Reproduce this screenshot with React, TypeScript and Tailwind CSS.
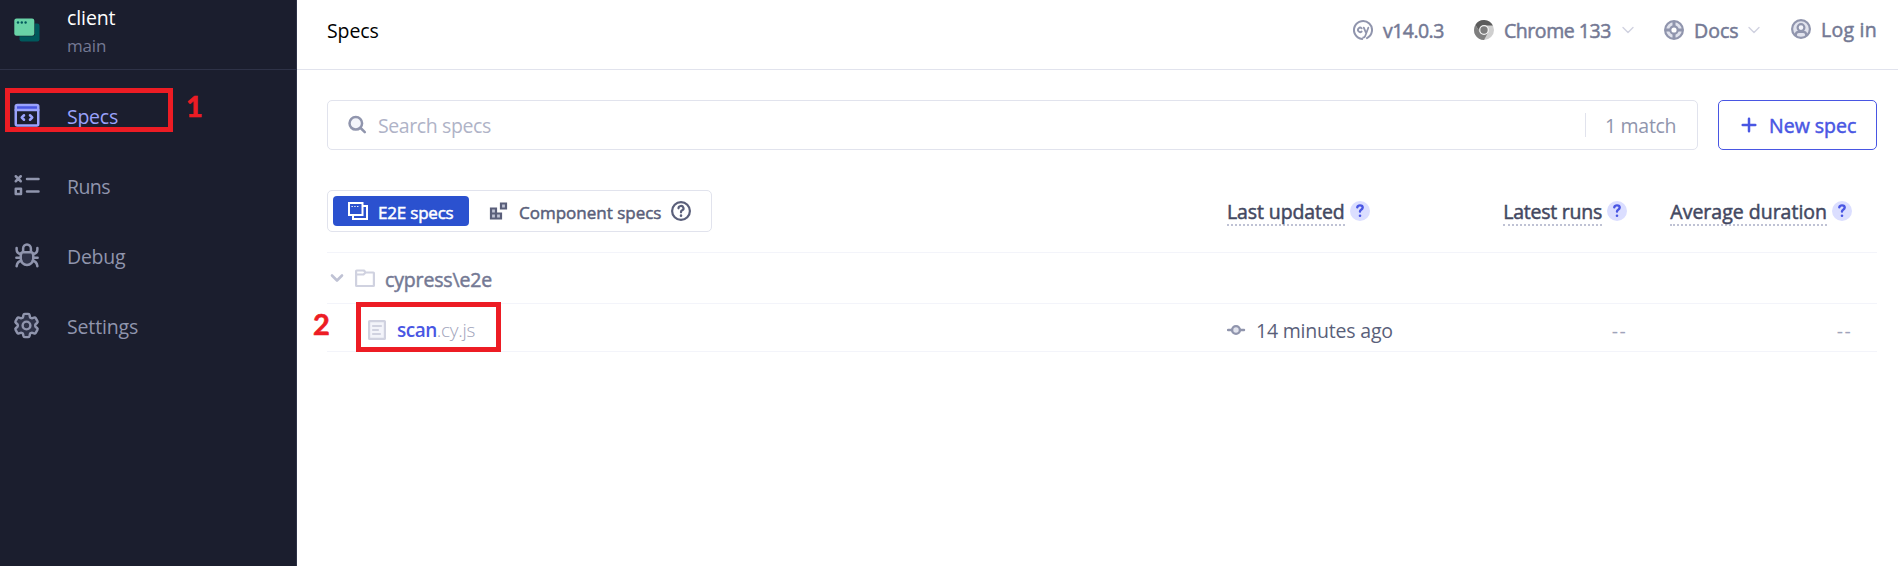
import React from "react";
import { HiOutlineCog6Tooth } from "react-icons/hi2";

const MEDIUM = "[-webkit-text-stroke:0.5px]";

function ProjectLogo() {
  return (
    <svg width="30" height="30" viewBox="0 0 30 30" className="shrink-0">
      <rect x="7.5" y="8.5" width="20" height="18" rx="2.2" fill="#00595c" />
      <rect x="2" y="3" width="20.7" height="18.3" rx="2.6" fill="#1b1e2e" />
      <rect x="2.3" y="3.5" width="20" height="17.3" rx="2.2" fill="#69d3a7" />
      <g fill="#00595c">
        <circle cx="6" cy="7.5" r="1.2" />
        <circle cx="9.8" cy="7.5" r="1.2" />
        <circle cx="13.6" cy="7.5" r="1.2" />
      </g>
    </svg>
  );
}

function SpecsIcon() {
  return (
    <svg width="30" height="30" viewBox="0 0 24 24" fill="none" strokeWidth="2" strokeLinecap="round" strokeLinejoin="round">
      <path d="M3 4h18v4H3z" fill="#4956e3" />
      <rect x="3" y="4" width="18" height="16.4" rx="1.2" stroke="#9aa2fc" />
      <path d="M3 8h18M9.6 12.2 7.8 14l1.8 1.8M14.4 12.2l1.8 1.8-1.8 1.8" stroke="#9aa2fc" />
    </svg>
  );
}

function RunsIcon() {
  return (
    <svg width="30" height="30" viewBox="0 0 24 24" fill="none" stroke="#9095ad" strokeWidth="2" strokeLinecap="round">
      <path d="m3 5 4 4M7 5 3 9M12 7.1h9.2M12 17.1h9.2" />
      <rect x="3" y="15" width="4.2" height="4.2" strokeLinejoin="round" />
    </svg>
  );
}

function DebugIcon() {
  return (
    <svg width="30" height="30" viewBox="0 0 24 24" fill="none" stroke="#9095ad" strokeWidth="2" strokeLinecap="round" strokeLinejoin="round">
      <path d="M8.9 9.6V6.7a3.1 3.1 0 0 1 6.2 0v2.9" />
      <path d="M9 9.8h6c1.3 0 2 .8 2 2v3.2a5 5 0 0 1-10 0v-3.2c0-1.2.7-2 2-2Z" fill="#2e3247" />
      <path d="M3.7 6.3v1.2c0 2 1 3.3 3.6 3.7M20.3 6.3v1.2c0 2-1 3.3-3.6 3.7M3.5 14.2H7M17 14.2h3.5M7.4 16.6c-2.2.4-3.4 1.8-3.7 4.4M16.6 16.6c2.2.4 3.4 1.8 3.7 4.4" />
    </svg>
  );
}

function CyIcon() {
  return (
    <svg width="20" height="20" viewBox="0 0 20 20" fill="none" stroke="#9095ad" strokeWidth="2" strokeLinecap="round">
      <path d="M9.2 19A9 9 0 1 1 14 18.1" />
      <path d="M8.7 8.300a2.200 2.200 0 1 0 0 3.200M10.800 7.700l1.900 4.500M15.300 7.700l-3.200 8.500c-.4 1-.9 1.400-1.900 1.300" strokeWidth="1.800" />
    </svg>
  );
}

function ChromeIcon() {
  return (
    <svg width="20" height="20" viewBox="0 0 20 20">
      <circle cx="10" cy="10" r="10" fill="#cfcfcf" />
      <path d="M10 5.500h8.900A10 10 0 0 0 1.340 5L6 12Z" fill="#5c5c5c" />
      <path d="M1.340 5A10 10 0 0 0 10 20l4-7.500-8-.3Z" fill="#7f7f7f" />
      <circle cx="10" cy="10" r="4.900" fill="#f4f4f4" />
      <circle cx="10" cy="10" r="3.700" fill="#7d7d7d" />
    </svg>
  );
}

function DocsIcon() {
  return (
    <svg width="20" height="20" viewBox="0 0 20 20" fill="none" stroke="#9095ad" strokeWidth="2.200">
      <circle cx="10" cy="10" r="8.900" fill="#e1e3ed" />
      <circle cx="10" cy="10" r="3.700" fill="#fff" />
      <path d="M10 1v5.300M10 13.700V19M1 10h5.300M13.700 10H19" strokeWidth="3" />
    </svg>
  );
}

function UserIcon() {
  return (
    <svg width="20" height="20" viewBox="0 0 20 20" fill="none" stroke="#9095ad" strokeWidth="2.200">
      <circle cx="10" cy="10" r="8.900" fill="#e1e3ed" />
      <path d="M4.800 17v-1.300c0-1.800 1.300-2.900 3-2.900h4.400c1.700 0 3 1.100 3 2.900V17" />
      <circle cx="10" cy="8.600" r="3.400" fill="#f3f4fa" />
    </svg>
  );
}

function Chevron({ thin }: { thin?: boolean }) {
  return (
    <svg width="20" height="20" viewBox="0 0 20 20" fill="none" strokeLinecap="round" strokeLinejoin="round"
      stroke={thin ? "#d0d2e0" : "#bfc2d4"} strokeWidth={thin ? 1.4 : 2.6} className="shrink-0">
      <path d="m5 7.500 5 5 5-5" />
    </svg>
  );
}

function E2EIcon() {
  return (
    <svg width="20" height="20" viewBox="0 0 20 20" fill="none" stroke="#fff" strokeWidth="2">
      <path d="M16 5h3v13H5v-3.500" />
      <rect x="1" y="2" width="13.500" height="12" />
      <path d="M14.500 5H16M5 14.500V18" />
      <path d="M3.500 5.500h1.300M6.300 5.500h1.300M9.100 5.500h1.300" strokeWidth="1.200" />
    </svg>
  );
}

function ComponentIcon() {
  return (
    <svg width="20" height="20" viewBox="0 0 20 20" fill="#bfc2d4" stroke="#5a5f7a" strokeWidth="2.200">
      <path d="M2 7.500h5v5H2zM2 12.500h5v5H2zM7 12.500h5v5H7zM12 2.500h5v5h-5z" />
    </svg>
  );
}

function HelpIcon() {
  return (
    <svg width="20" height="20" viewBox="0 0 20 20" fill="none" stroke="#5a5f7a" strokeWidth="2.200" strokeLinecap="round" strokeLinejoin="round" className="shrink-0">
      <circle cx="10" cy="10" r="8.900" />
      <path d="M7.500 7.300a2.500 2.300 0 1 1 3.700 2c-.8.400-1.200.8-1.200 1.700v.3" />
      <path d="M10 14.600v.1" strokeWidth="2.500" />
    </svg>
  );
}

function Tip() {
  return (
    <svg width="20" height="20" viewBox="0 0 20 20" fill="none" stroke="#4956e3" strokeWidth="2.400" strokeLinecap="round" className="shrink-0">
      <circle cx="10" cy="10" r="10" fill="#dbdeff" stroke="none" />
      <path d="M7.300 6.300c.3-1.300 1.300-1.900 2.700-1.900 1.600 0 2.700.8 2.700 2.200 0 1-.5 1.600-1.500 2.200-.8.500-1.200 1-1.200 1.700" />
      <path d="M10 14.700v.1" strokeWidth="2.600" />
    </svg>
  );
}

function Heading({ children }: { children: React.ReactNode }) {
  return (
    <div className="flex h-[38px] items-start gap-[5px]">
      <span className={`h-[28px] border-b-2 border-dotted border-[#bfc2d4] pt-[1px] text-[19.5px] leading-[26px] text-[#434861] ${MEDIUM}`}>{children}</span>
      <span className="pt-[3px]"><Tip /></span>
    </div>
  );
}

const nav = [
  { label: <span className="tracking-[-0.25px]">Specs</span>, icon: <SpecsIcon />, active: true },
  { label: <span className="tracking-[-0.6px]">Runs</span>, icon: <RunsIcon /> },
  { label: <span className="tracking-[-0.25px]">Debug</span>, icon: <DebugIcon /> },
  { label: <span className="tracking-[-0.15px]">Settings</span>, icon: <HiOutlineCog6Tooth size={31} strokeWidth={1.9} fill="#2e3247" color="#9095ad" className="-ml-px" /> },
];

export default function App() {
  return (
    <div className="relative flex h-[566px] w-[1898px] overflow-hidden bg-white font-['Open_Sans',sans-serif] text-[19.5px] whitespace-nowrap">
      <aside className="w-[297px] shrink-0 border-r border-[#2e3247] bg-[#1b1e2e]">
        <div className="flex h-[70px] border-b border-[#2e3247] pl-3">
          <div className="pt-[15px]"><ProjectLogo /></div>
          <div className="pt-[3px] pl-[25px]">
            <div className="leading-[30px] tracking-[-0.1px] text-white">client</div>
            <div className="text-[17px] leading-[26px] tracking-[-0.2px] text-[#747994]">main</div>
          </div>
        </div>
        <nav className="pt-[10px]">
          {nav.map((item, i) => (
            <div key={i} className={`flex h-[70px] items-center pl-3 ${item.active ? "text-[#9aa2fc]" : "text-[#9095ad]"}`}>
              <span className="flex w-[55px] shrink-0">{item.icon}</span>
              <span className="pt-[3px]">{item.label}</span>
            </div>
          ))}
        </nav>
      </aside>

      <main className="w-[1601px]">
        <header className="flex h-[70px] items-start justify-between border-b border-[#e1e3ed] pt-[15px] pr-[21px] pl-[30px] leading-[30px]">
          <h1 className="pt-[1px] tracking-[-0.1px] text-black">Specs</h1>
          <div className={`flex items-start text-[#747994] ${MEDIUM}`}>
            <div className="flex h-[30px] w-[121px] items-center gap-[10px]">
              <CyIcon /><span className="pt-[2px] tracking-[-0.55px]">v14.0.3</span>
            </div>
            <div className="flex h-[30px] w-[190px] items-center gap-[10px]">
              <ChromeIcon />
              <span className="flex items-center"><span className="w-[114px] pt-[2px] tracking-[-0.45px]">Chrome 133</span><Chevron thin /></span>
            </div>
            <div className="flex h-[30px] w-[127px] items-center gap-[10px]">
              <DocsIcon />
              <span className="flex items-center"><span className="w-[50px] pt-[2px]">Docs</span><Chevron thin /></span>
            </div>
            <div className="flex h-[28px] w-[86px] items-center gap-[10px]">
              <UserIcon /><span className="pt-[2px] tracking-[0.25px]">Log in</span>
            </div>
          </div>
        </header>

        <div className="pt-[30px] pr-[21px] pl-[30px]">
          <div className="flex gap-5">
            <div className="flex h-[50px] w-[1371px] items-center rounded-[5px] border border-[#e1e3ed] pl-5">
              <svg width="20" height="20" viewBox="0 0 20 20" fill="none" stroke="#9095ad" strokeWidth="2.500" strokeLinecap="round">
                <circle cx="7.800" cy="8.300" r="6.300" fill="#f3f4fa" />
                <path d="m12.600 13 4.200 4.200" />
              </svg>
              <span className="flex-1 pt-[2px] pl-[10px] tracking-[-0.4px] text-[#afb3c7]">Search specs</span>
              <span className="h-6 w-px bg-[#e1e3ed]" />
              <span className="w-[111px] pt-[2px] pl-[19px] tracking-[-0.3px] text-[#9095ad]">1 match</span>
            </div>
            <button className={`flex h-[50px] w-[159px] items-center gap-[10px] rounded-[5px] border border-[#4956e3] pl-5 text-[#4956e3] ${MEDIUM}`}>
              <svg width="20" height="20" viewBox="0 0 20 20" stroke="#4956e3" strokeWidth="2.500" strokeLinecap="round">
                <path d="M10 3.700v12.600M3.700 10h12.600" />
              </svg>
              <span className="pt-[2px]">New spec</span>
            </button>
          </div>

          <div className="mt-10 flex h-[63px] border-b border-[#f3f4fa]">
            <div className="w-[900px]">
              <div className={`flex h-[42px] w-[385px] items-center rounded-[5px] border border-[#e1e3ed] pl-[5px] text-[17px] ${MEDIUM}`}>
                <div className="flex h-[30px] w-[136px] items-center gap-[10px] rounded-[4px] bg-[#2b51cf] pl-[15px] text-white">
                  <E2EIcon /><span className="pt-[3px] tracking-[-0.2px]">E2E specs</span>
                </div>
                <div className="flex items-center pl-[20px] text-[#5a5f7a]">
                  <ComponentIcon />
                  <span className="w-[162px] pt-[3px] pl-[10px]">Component specs</span>
                  <HelpIcon />
                </div>
              </div>
            </div>
            <div className="w-[170px] pt-[8px]"><Heading><span className="tracking-[-0.1px]">Last updated</span></Heading></div>
            <div className="flex w-[230px] justify-end pt-[8px]"><Heading><span className="tracking-[-0.25px]">Latest runs</span></Heading></div>
            <div className="flex w-[225px] justify-end pt-[8px]"><Heading>Average duration</Heading></div>
          </div>

          <div className="flex h-[51px] items-center border-b border-[#f3f4fa]">
            <Chevron />
            <svg width="20" height="20" viewBox="0 0 20 20" fill="none" stroke="#d0d2e0" strokeWidth="2.200" strokeLinejoin="round" className="ml-2">
              <path d="M1.100 5.500V17.500q0 .5.500.5h16.800q.5 0 .500-.5V5q0-.500-.500-.500h-8L9 2.500H1.600q-.500 0-.500.500V6.500h7.400L10.500 4.500" />
            </svg>
            <span className={`pt-[3px] pl-[10px] tracking-[-0.15px] text-[#747994] ${MEDIUM}`}>cypress\e2e</span>
          </div>

          <div className="flex h-[48px] items-center border-b border-[#f3f4fa] pt-[4px]">
            <div className="flex w-[900px] items-center pl-10">
              <svg width="20" height="20" viewBox="0 0 20 20" fill="#f3f4fa" stroke="#d0d2e0" strokeWidth="2.200" strokeLinejoin="round" strokeLinecap="round">
                <rect x="2.100" y="1.100" width="15.800" height="17.800" rx="0.500" />
                <path d="M6 6h8M6 10h5M6 14h7" />
              </svg>
              <span className="pt-[2px] pl-[10px] text-[19px] font-semibold tracking-[-0.5px] text-[#4956e3]">scan</span>
              <span className="pt-[2px] text-[19px] font-light tracking-[-0.3px] text-[#9fa4bb]">.cy.js</span>
            </div>
            <div className="flex w-[170px] items-center gap-[9px]">
              <svg width="20" height="20" viewBox="0 0 20 20" stroke="#9095ad" strokeWidth="2.400" strokeLinecap="round">
                <path d="M1 10h16" />
                <circle cx="9" cy="10" r="3.900" fill="#e1e3ed" />
              </svg>
              <span className="pt-[2px] tracking-[-0.2px] text-[#5a5f7a]">14 minutes ago</span>
            </div>
            <div className="w-[230px] pt-[2px] text-right tracking-[1.3px] text-[#9fa4bb]">--</div>
            <div className="w-[225px] pt-[2px] text-right tracking-[1.3px] text-[#9fa4bb]">--</div>
          </div>
        </div>
      </main>

      <div className="absolute top-[88px] left-[5px] h-[44px] w-[168px] border-5 border-[#ed1c24]" />
      <div className="absolute top-[302px] left-[356px] h-[50px] w-[145px] border-5 border-[#ed1c24]" />
      <div className="absolute top-[88px] left-[186px] font-['Lato',sans-serif] text-[29px] leading-[36px] font-bold text-[#ed1c24] [-webkit-text-stroke:0.6px]">1</div>
      <div className="absolute top-[306px] left-[313px] font-['Lato',sans-serif] text-[29px] leading-[36px] font-bold text-[#ed1c24] [-webkit-text-stroke:0.6px]">2</div>
    </div>
  );
}
